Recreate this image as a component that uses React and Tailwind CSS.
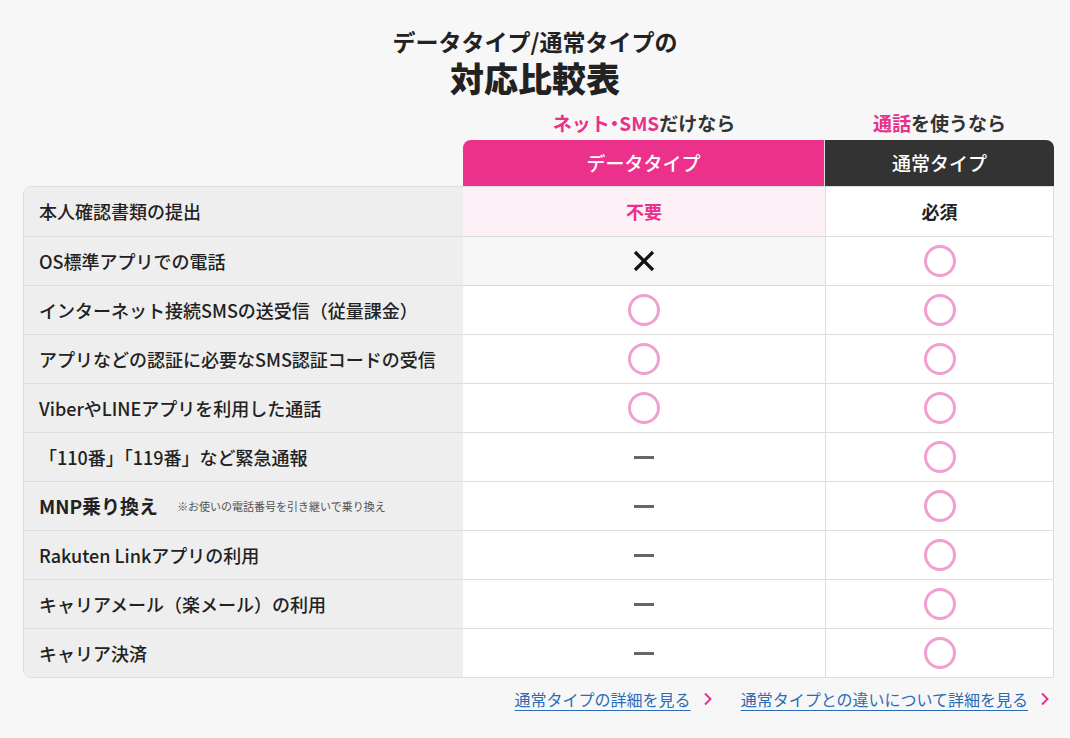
import React from 'react';

const rows = [
  { label: '本人確認書類の提出', data: 'no', normal: 'required' },
  { label: 'OS標準アプリでの電話', data: 'x', normal: 'o' },
  { label: 'インターネット接続SMSの送受信（従量課金）', data: 'o', normal: 'o' },
  { label: 'アプリなどの認証に必要なSMS認証コードの受信', data: 'o', normal: 'o' },
  { label: 'ViberやLINEアプリを利用した通話', data: 'o', normal: 'o' },
  { label: '「110番」「119番」など緊急通報', data: '-', normal: 'o' },
  { label: 'MNP乗り換え', note: '※お使いの電話番号を引き継いで乗り換え', data: '-', normal: 'o' },
  { label: 'Rakuten Linkアプリの利用', data: '-', normal: 'o' },
  { label: 'キャリアメール（楽メール）の利用', data: '-', normal: 'o' },
  { label: 'キャリア決済', data: '-', normal: 'o' },
];

function Mark({ type }) {
  if (type === 'o') {
    return <span className="block w-[32px] h-[32px] rounded-full border-[3px] border-[#f19fd0]" />;
  }
  if (type === 'x') {
    return (
      <svg width="24" height="24" viewBox="0 0 24 24">
        <path d="M3 3L21 21M21 3L3 21" stroke="#111" strokeWidth="3.2" />
      </svg>
    );
  }
  if (type === '-') {
    return <span className="block w-[20px] h-[3px] bg-[#666]" />;
  }
  if (type === 'no') {
    return <span className="text-[18px] font-bold text-[#e8318a]">不要</span>;
  }
  return <span className="text-[18px] font-bold text-[#222]">必須</span>;
}

function Chevron() {
  return (
    <svg width="10" height="14" viewBox="0 0 10 14" className="ml-[12px]">
      <path d="M2 1.5L7.5 7L2 12.5" fill="none" stroke="#e8318a" strokeWidth="2" />
    </svg>
  );
}

export default function App() {
  return (
    <div
      className="min-h-[738px] bg-[#f7f7f7] text-[#222]"
      style={{ fontFamily: '"Noto Sans CJK JP", "Noto Sans", sans-serif' }}
    >
      <div className="pt-[25px] text-center">
        <h1>
          <span className="block text-[23px] font-bold leading-[32px]">データタイプ/通常タイプの</span>
          <span className="block text-[34px] font-black leading-[42px]">対応比較表</span>
        </h1>
      </div>

      <div className="pl-[23px] pr-[16px] mt-[7px]">
        <div className="grid grid-cols-[440px_362px_1fr] text-center">
          <div />
          <div className="h-[34px] flex items-center justify-center text-[19px] font-bold">
            <span className="text-[#e8318a]">
              ネット<span className="[font-feature-settings:'palt']">・</span>SMS
            </span>
            <span className="text-[#333]">だけなら</span>
          </div>
          <div className="h-[34px] flex items-center justify-center text-[19px] font-bold">
            <span className="text-[#e8318a]">通話</span>
            <span className="text-[#333]">を使うなら</span>
          </div>
          <div />
          <div className="h-[46px] flex items-center justify-center bg-[#eb318b] text-white text-[19px] font-medium rounded-tl-[8px] border-r border-[#ddd]">
            データタイプ
          </div>
          <div className="h-[46px] flex items-center justify-center bg-[#333] text-white text-[19px] font-medium rounded-tr-[8px]">
            通常タイプ
          </div>
        </div>

        <div className="border border-[#ddd] rounded-l-[8px] overflow-hidden">
          {rows.map((r, i) => (
            <div
              key={i}
              className={`grid grid-cols-[439px_363px_1fr] h-[49px] ${i > 0 ? 'border-t border-[#ddd]' : ''}`}
            >
              <div className="bg-[#eeeeee] flex items-center pl-[15px] text-[18px] text-[#222]">
                <span className={r.note ? 'font-bold text-[19px]' : 'font-medium'}>{r.label}</span>
                {r.note && <span className="ml-[19px] text-[11px] text-[#555]">{r.note}</span>}
              </div>
              <div
                className={`flex items-center justify-center border-r border-[#ddd] ${
                  i === 0 ? 'bg-[#fdf1f7]' : i === 1 ? 'bg-[#f6f6f6]' : 'bg-white'
                }`}
              >
                <Mark type={r.data} />
              </div>
              <div className="flex items-center justify-center bg-white">
                <Mark type={r.normal} />
              </div>
            </div>
          ))}
        </div>

        <div className="flex justify-end items-center gap-[28px] mt-[9px] pr-[4px] text-[16px]">
          <a href="#" className="flex items-center text-[#2b6cb6] underline underline-offset-[4px]">
            通常タイプの詳細を見る
            <Chevron />
          </a>
          <a href="#" className="flex items-center text-[#2b6cb6] underline underline-offset-[4px]">
            通常タイプとの違いについて詳細を見る
            <Chevron />
          </a>
        </div>
      </div>
    </div>
  );
}
